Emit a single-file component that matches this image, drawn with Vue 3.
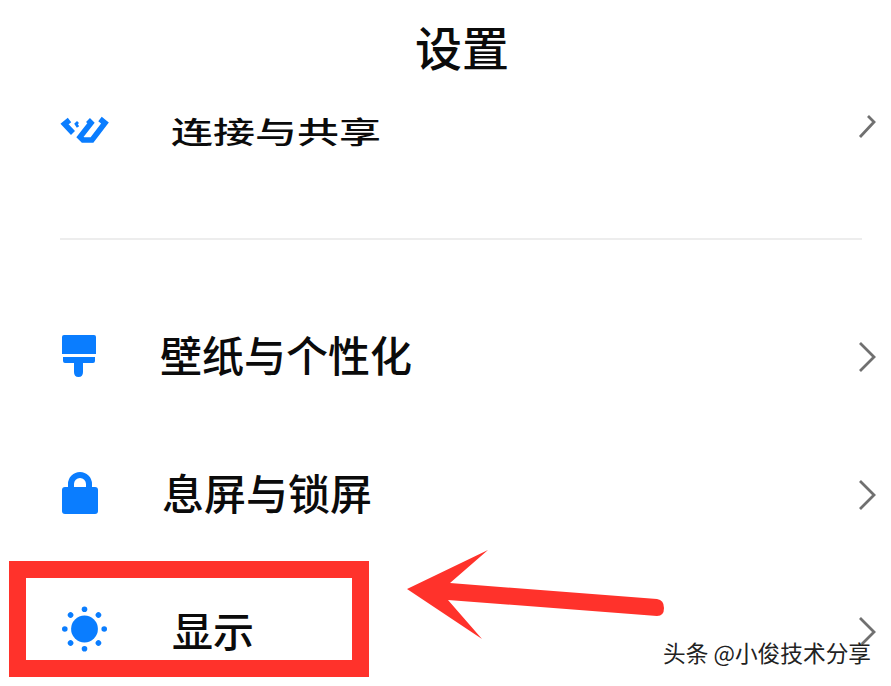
<script setup>
const rows = [
  { key: 'wall', label: '壁纸与个性化' },
  { key: 'lock', label: '息屏与锁屏' },
  { key: 'sun', label: '显示' }
]
const rays = [0, 45, 90, 135, 180, 225, 270, 315]
</script>

<template>
  <div class="page">
    <header class="title">设置</header>

    <div class="row row-link">
      <svg class="icon" width="60" height="40" viewBox="0 0 60 40">
        <path class="line" d="M9.5 10 L4.5 14 L13 23" stroke-width="5.5" />
        <path class="line" d="M18 12 L16 14 L18 17" stroke-width="2.8" />
        <path class="line" d="M28 10 L31 13 L20 27 L23 30 L32 30 L45 13 L40 9" stroke-width="5.5" />
      </svg>
      <span class="label label-link">连接与共享</span>
      <svg class="chev" width="20" height="32" viewBox="0 0 20 32"><path d="M10 2 L16 8 L2 23" /></svg>
    </div>

    <div class="divider"></div>

    <div v-for="row in rows" :key="row.key" class="row" :class="'row-' + row.key">
      <svg v-if="row.key === 'wall'" class="icon" width="60" height="44" viewBox="0 0 60 44">
        <path class="blue" d="M4 0 H34 Q36 0 36 2 V19 H2 V2 Q2 0 4 0 Z" />
        <path class="blue" d="M3 22 H35 V26 Q35 28 33 28 H23 V37 Q23 42 18.5 42 Q14 42 14 37 V28 H5 Q3 28 3 26 Z" />
      </svg>
      <svg v-else-if="row.key === 'lock'" class="icon" width="60" height="48" viewBox="0 0 60 48">
        <path class="blue" d="M8 16 V13 A12 12 0 0 1 32 13 V16 Z M14 16 H26 V13 A6 6 0 0 0 14 13 Z" fill-rule="evenodd" />
        <path class="blue" d="M5 16 H35 Q38 16 38 19 V40 Q38 43 35 43 H5 Q2 43 2 40 V19 Q2 16 5 16 Z" />
      </svg>
      <svg v-else class="icon" width="60" height="54" viewBox="0 0 60 54">
        <circle class="blue" cx="24.5" cy="24" r="13.4" />
        <rect
          v-for="r in rays"
          :key="r"
          class="blue"
          x="21.7"
          y="1.5"
          width="5.6"
          height="5.6"
          rx="2.8"
          :transform="`rotate(${r} 24.5 24)`"
        />
      </svg>
      <span class="label" :class="'label-' + row.key">{{ row.label }}</span>
      <svg class="chev" width="20" height="32" viewBox="0 0 20 32"><path d="M2 2 L16 16 L2 30" /></svg>
    </div>

    <div class="mark-box"></div>
    <svg class="mark-arrow" width="270" height="110" viewBox="0 0 270 110">
      <path d="M2 42 L83 3 L45 36 L252 52 Q259 53 259 61 Q259 69 252 69 L43 53 L77 92 Z" />
    </svg>
    <div class="watermark">头条 @小俊技术分享</div>
  </div>
</template>

<style>
html, body { margin: 0; background: #fff; }
</style>

<style scoped>
.page {
  position: relative;
  width: 891px;
  height: 686px;
  overflow: hidden;
  background: #fff;
  color: #0b0b0b;
  font-family: "Noto Sans CJK SC", "Liberation Sans", sans-serif;
}
.title {
  height: 96px;
  line-height: 92px;
  padding-left: 415px;
  font-size: 47px;
  font-weight: 500;
  letter-spacing: 0;
}
.row {
  display: flex;
  align-items: center;
  height: 68px;
  padding: 0 13px 0 60px;
}
.icon { flex: none; }
.blue { fill: #0a7dff; }
.line { fill: none; stroke: #0a7dff; stroke-linejoin: miter; }
.label {
  flex: 1;
  font-size: 42px;
  line-height: 62px;
  margin-bottom: 6px;
  font-weight: 500;
}
.label-link {
  margin-left: 51px;
  margin-bottom: 0;
  line-height: 66px;
  transform: scaleY(0.7);
  transform-origin: center;
}
.label-wall { margin-left: 40px; }
.label-lock { margin-left: 42px; }
.label-sun { margin-left: 52px; font-size: 41px; }
.chev { flex: none; }
.chev path { fill: none; stroke: #707070; stroke-width: 2.8; }
.divider {
  height: 2px;
  margin: 74px 29px 83px 60px;
  background: #ededed;
}
.row-lock { margin-top: 70px; }
.row-sun { margin-top: 69px; }
.mark-box {
  position: absolute;
  left: 9px;
  top: 561px;
  width: 326px;
  height: 82px;
  border: 17px solid #ff322b;
}
.mark-arrow {
  position: absolute;
  left: 405px;
  top: 547px;
  fill: #ff322b;
}
.watermark {
  position: absolute;
  left: 663px;
  top: 638px;
  font-size: 22.7px;
  line-height: 30px;
  color: #222;
  white-space: nowrap;
  text-shadow: 1px 1px 0 #fff;
}
</style>
